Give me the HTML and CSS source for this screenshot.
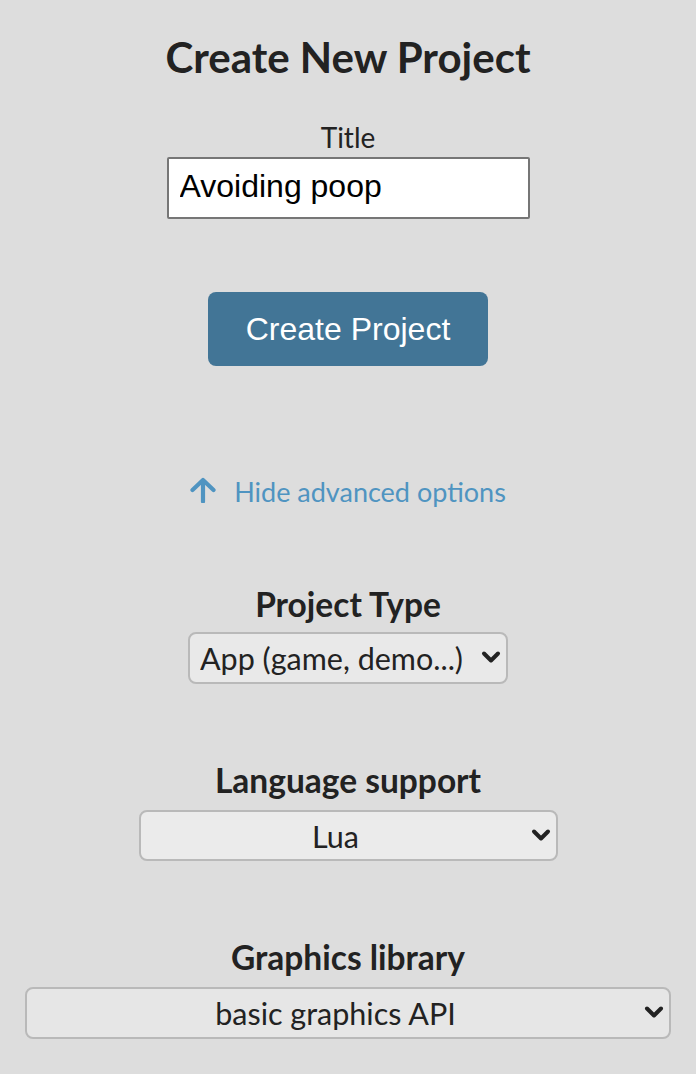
FILE: index.html
```html
<!DOCTYPE html>
<html lang="en">
<head>
<meta charset="utf-8">
<title>Create New Project</title>
<link rel="stylesheet" href="styles.css">
</head>
<body>
<main class="page">
  <h1 class="page-title">Create New Project</h1>
  <label class="field-label" for="title">Title</label>
  <input class="title-input" id="title" type="text" value="Avoiding poop">
  <div class="actions">
    <button class="create-btn" type="button">Create Project</button>
  </div>
  <a class="toggle-link" href="#">
    <svg class="toggle-icon" width="26" height="26" viewBox="0 0 26 26" aria-hidden="true">
      <path d="M13 24.5V3.5M2.5 13L13 3L23.5 13" fill="none" stroke="currentColor" stroke-width="4.2" stroke-linecap="round" stroke-linejoin="round"/>
    </svg>
    <span>Hide advanced options</span>
  </a>
  <section class="option option-first">
    <h2 class="option-label">Project Type</h2>
    <div class="select-wrap select-type">
      <select class="select select-left">
        <option>App (game, demo...)</option>
      </select>
      <svg class="chevron" width="20" height="14" viewBox="0 0 20 14" aria-hidden="true"><path d="M3 3.5L10 10.5L17 3.5" fill="none" stroke="#222" stroke-width="4" stroke-linecap="round" stroke-linejoin="round"/></svg>
    </div>
  </section>
  <section class="option">
    <h2 class="option-label">Language support</h2>
    <div class="select-wrap select-lang">
      <select class="select select-center select-light">
        <option>Lua</option>
      </select>
      <svg class="chevron" width="20" height="14" viewBox="0 0 20 14" aria-hidden="true"><path d="M3 3.5L10 10.5L17 3.5" fill="none" stroke="#222" stroke-width="4" stroke-linecap="round" stroke-linejoin="round"/></svg>
    </div>
  </section>
  <section class="option">
    <h2 class="option-label">Graphics library</h2>
    <div class="select-wrap select-gfx">
      <select class="select select-center select-dark">
        <option>basic graphics API</option>
      </select>
      <svg class="chevron" width="20" height="14" viewBox="0 0 20 14" aria-hidden="true"><path d="M3 3.5L10 10.5L17 3.5" fill="none" stroke="#222" stroke-width="4" stroke-linecap="round" stroke-linejoin="round"/></svg>
    </div>
  </section>
</main>
</body>
</html>
```
FILE: styles.css
```css
html, body {
  margin: 0;
  padding: 0;
  background: #dddddd;
}
body {
  font-family: Lato, "Liberation Sans", sans-serif;
  color: #222222;
}
.page {
  display: flex;
  flex-direction: column;
  align-items: center;
  padding-top: 33px;
  text-align: center;
}
.page-title {
  margin: 0;
  font-size: 42px;
  line-height: 48px;
  font-weight: 700;
}
.field-label {
  display: block;
  margin-top: 39px;
  margin-bottom: 3px;
  font-size: 28px;
  line-height: 34px;
}
.title-input {
  box-sizing: border-box;
  width: 363px;
  height: 62px;
  margin: 0;
  padding: 0 12px 3px 11px;
  border: 2px solid #767676;
  border-radius: 2px;
  background: #ffffff;
  font-family: "Liberation Sans", Arial, sans-serif;
  font-size: 32px;
  color: #000000;
}
.actions {
  margin-top: 73px;
}
.create-btn {
  box-sizing: border-box;
  width: 280px;
  height: 74px;
  border: none;
  border-radius: 8px;
  background: #427596;
  color: #ffffff;
  font-family: "Liberation Sans", Arial, sans-serif;
  font-size: 32px;
  padding: 0;
}
.toggle-link {
  display: flex;
  align-items: center;
  gap: 18px;
  margin-top: 109px;
  color: #4f94c1;
  text-decoration: none;
  font-size: 27px;
  line-height: 34px;
}
.toggle-icon {
  display: block;
  margin-top: -4px;
}
.option {
  display: flex;
  flex-direction: column;
  align-items: center;
  margin-top: 77px;
  width: 100%;
}
.option-first {
  margin-top: 76px;
}
.option-label {
  margin: 0 0 11px;
  font-size: 33.5px;
  line-height: 38px;
  font-weight: 700;
}
.option-first .option-label {
  margin-bottom: 9px;
}
.select-wrap {
  position: relative;
}
.select {
  display: block;
  box-sizing: border-box;
  height: 52px;
  margin: 0;
  padding: 0 37px 0 12px;
  border: 2px solid #b9b9b9;
  border-radius: 8px;
  background: #e9e9e9;
  color: #222222;
  font-family: Lato, "Liberation Sans", sans-serif;
  font-size: 30.5px;
  -webkit-appearance: none;
  appearance: none;
}
.select-left {
  text-align: left;
  padding-left: 10px;
  padding-right: 30px;
}
.select-center {
  text-align: center;
  text-align-last: center;
}
.select-light {
  background: #ebebeb;
}
.select-dark {
  background: #e6e6e6;
}
.select-type .select {
  width: 320px;
}
.select-lang .select {
  width: 419px;
  height: 51px;
}
.select-gfx .select {
  width: 646px;
}
.chevron {
  position: absolute;
  right: 7px;
  top: 50%;
  margin-top: -8px;
  pointer-events: none;
}
```
